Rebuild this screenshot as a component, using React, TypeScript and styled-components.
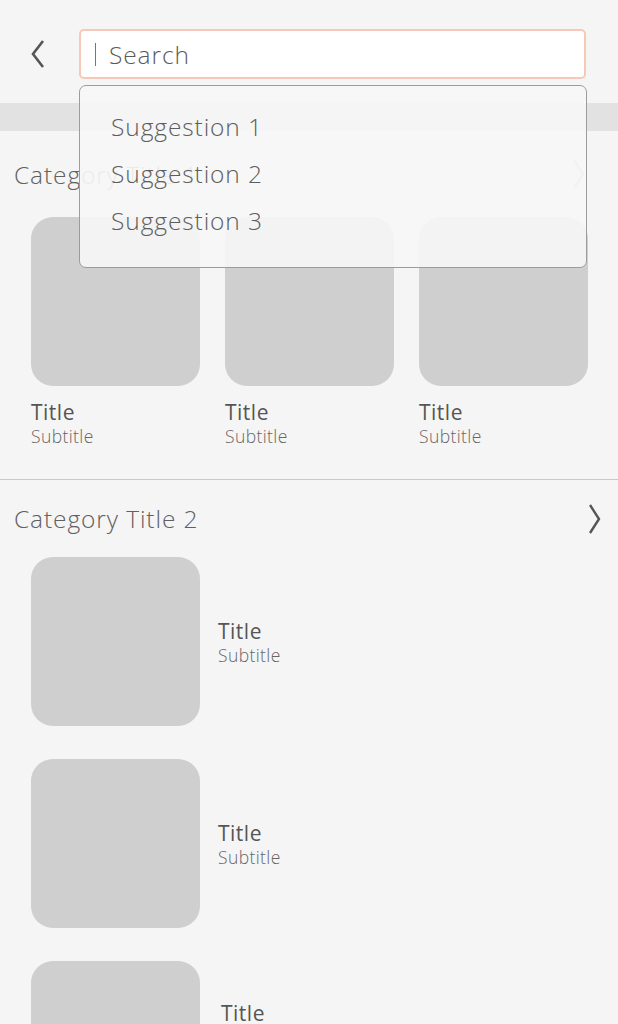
import React from "react";
import styled, { createGlobalStyle } from "styled-components";

const Global = createGlobalStyle`
  html, body { margin: 0; padding: 0; background: #f5f5f5; }
  body { font-family: "Open Sans", "Noto Sans", sans-serif; color: #5d5d5d; }
  * { box-sizing: border-box; }
`;

const Page = styled.div`
  position: relative;
  width: 618px;
  height: 1024px;
  overflow: hidden;
  background: #f5f5f5;
`;

const Header = styled.header`
  height: 103px;
  display: flex;
  align-items: flex-start;
  padding: 29px 32px 0 30px;
  gap: 33px;
`;

const BackButton = styled.button`
  width: 16px;
  height: 50px;
  border: none;
  background: none;
  padding: 0;
  display: flex;
  align-items: center;
  justify-content: center;
  cursor: pointer;
`;

const SearchBox = styled.div`
  flex: 1;
  height: 50px;
  background: #ffffff;
  border: 2px solid #f6c9b6;
  border-radius: 5px;
  display: flex;
  align-items: center;
  padding-left: 14px;
  gap: 13px;
`;

const Caret = styled.span`
  width: 1px;
  height: 23px;
  background: #777;
`;

const SearchText = styled.span`
  font-size: 24.5px;
  font-weight: 300;
  color: #5a5a5a;
  letter-spacing: 0.9px;
`;

const Dropdown = styled.div`
  position: absolute;
  left: 79px;
  top: 85px;
  width: 508px;
  height: 183px;
  border: 1px solid #9c9c9c;
  border-radius: 7px;
  background: rgba(246, 246, 246, 0.92);
  padding: 17px 0 0 31px;
  display: flex;
  flex-direction: column;
`;

const Suggestion = styled.div`
  height: 47px;
  line-height: 47px;
  font-size: 24.5px;
  font-weight: 300;
  color: #5d5d5d;
  letter-spacing: 0.9px;
`;

const Band = styled.div`
  height: 28px;
  background: #e2e2e2;
`;

const Section = styled.section<{ $divider?: boolean }>`
  padding-bottom: 32px;
  border-bottom: ${(p) => (p.$divider ? "1px solid #c9c9c9" : "none")};
`;

const SectionHead = styled.div<{ $h: number; $right: number }>`
  height: ${(p) => p.$h}px;
  display: flex;
  align-items: center;
  justify-content: space-between;
  padding: 0 ${(p) => p.$right}px 0 14px;
`;

const SectionTitle = styled.h2`
  margin: 0;
  font-size: 24.5px;
  font-weight: 300;
  color: #606060;
  letter-spacing: 0.9px;
`;

const CardGrid = styled.div`
  display: grid;
  grid-template-columns: repeat(3, 169px);
  column-gap: 25px;
  padding-left: 31px;
`;

const Card = styled.div`
  display: flex;
  flex-direction: column;
`;

const Thumb = styled.div`
  width: 169px;
  height: 169px;
  border-radius: 22px;
  background: #cfcfcf;
`;

const Caption = styled.div<{ $top?: number }>`
  display: flex;
  flex-direction: column;
  margin-top: ${(p) => p.$top ?? 0}px;
`;

const ItemTitle = styled.div`
  font-size: 21px;
  line-height: 26px;
  font-weight: 400;
  color: #555;
  letter-spacing: 0.5px;
`;

const ItemSub = styled.div`
  font-size: 17.5px;
  line-height: 22px;
  font-weight: 300;
  color: #666;
  letter-spacing: 0.4px;
`;

const List = styled.div`
  display: flex;
  flex-direction: column;
  gap: 33px;
  padding-left: 31px;
`;

const Row = styled.div`
  display: flex;
  align-items: center;
  gap: 18px;
`;

const RowText = styled(Caption)<{ $shift?: boolean }>`
  align-self: ${(p) => (p.$shift ? "flex-start" : "center")};
  margin-top: ${(p) => (p.$shift ? 39 : 0)}px;
  margin-left: ${(p) => (p.$shift ? 3 : 0)}px;
`;

const Back = () => (
  <svg width="14" height="28" viewBox="0 0 14 28">
    <polyline points="12,1 2,14 12,27" fill="none" stroke="#555" strokeWidth="2.6" strokeLinejoin="miter" />
  </svg>
);

const Chevron = ({ color = "#555" }: { color?: string }) => (
  <svg width="12" height="30" viewBox="0 0 12 30">
    <polyline points="1,1 10,15 1,29" fill="none" stroke={color} strokeWidth="2.4" />
  </svg>
);

const cards = [0, 1, 2];
const rows = [0, 1, 2];

export default function App() {
  return (
    <Page>
      <Global />
      <Header>
        <BackButton aria-label="Back">
          <Back />
        </BackButton>
        <SearchBox>
          <Caret />
          <SearchText>Search</SearchText>
        </SearchBox>
      </Header>
      <Band />
      <Section $divider>
        <SectionHead $h={86} $right={33}>
          <SectionTitle>Category Title 1</SectionTitle>
          <Chevron color="#bdbdbd" />
        </SectionHead>
        <CardGrid>
          {cards.map((i) => (
            <Card key={i}>
              <Thumb />
              <Caption $top={13}>
                <ItemTitle>Title</ItemTitle>
                <ItemSub>Subtitle</ItemSub>
              </Caption>
            </Card>
          ))}
        </CardGrid>
      </Section>
      <Section>
        <SectionHead $h={77} $right={17}>
          <SectionTitle>Category Title 2</SectionTitle>
          <Chevron />
        </SectionHead>
        <List>
          {rows.map((i) => (
            <Row key={i}>
              <Thumb />
              <RowText $shift={i === 2}>
                <ItemTitle>Title</ItemTitle>
                <ItemSub>Subtitle</ItemSub>
              </RowText>
            </Row>
          ))}
        </List>
      </Section>
      <Dropdown>
        <Suggestion>Suggestion 1</Suggestion>
        <Suggestion>Suggestion 2</Suggestion>
        <Suggestion>Suggestion 3</Suggestion>
      </Dropdown>
    </Page>
  );
}
